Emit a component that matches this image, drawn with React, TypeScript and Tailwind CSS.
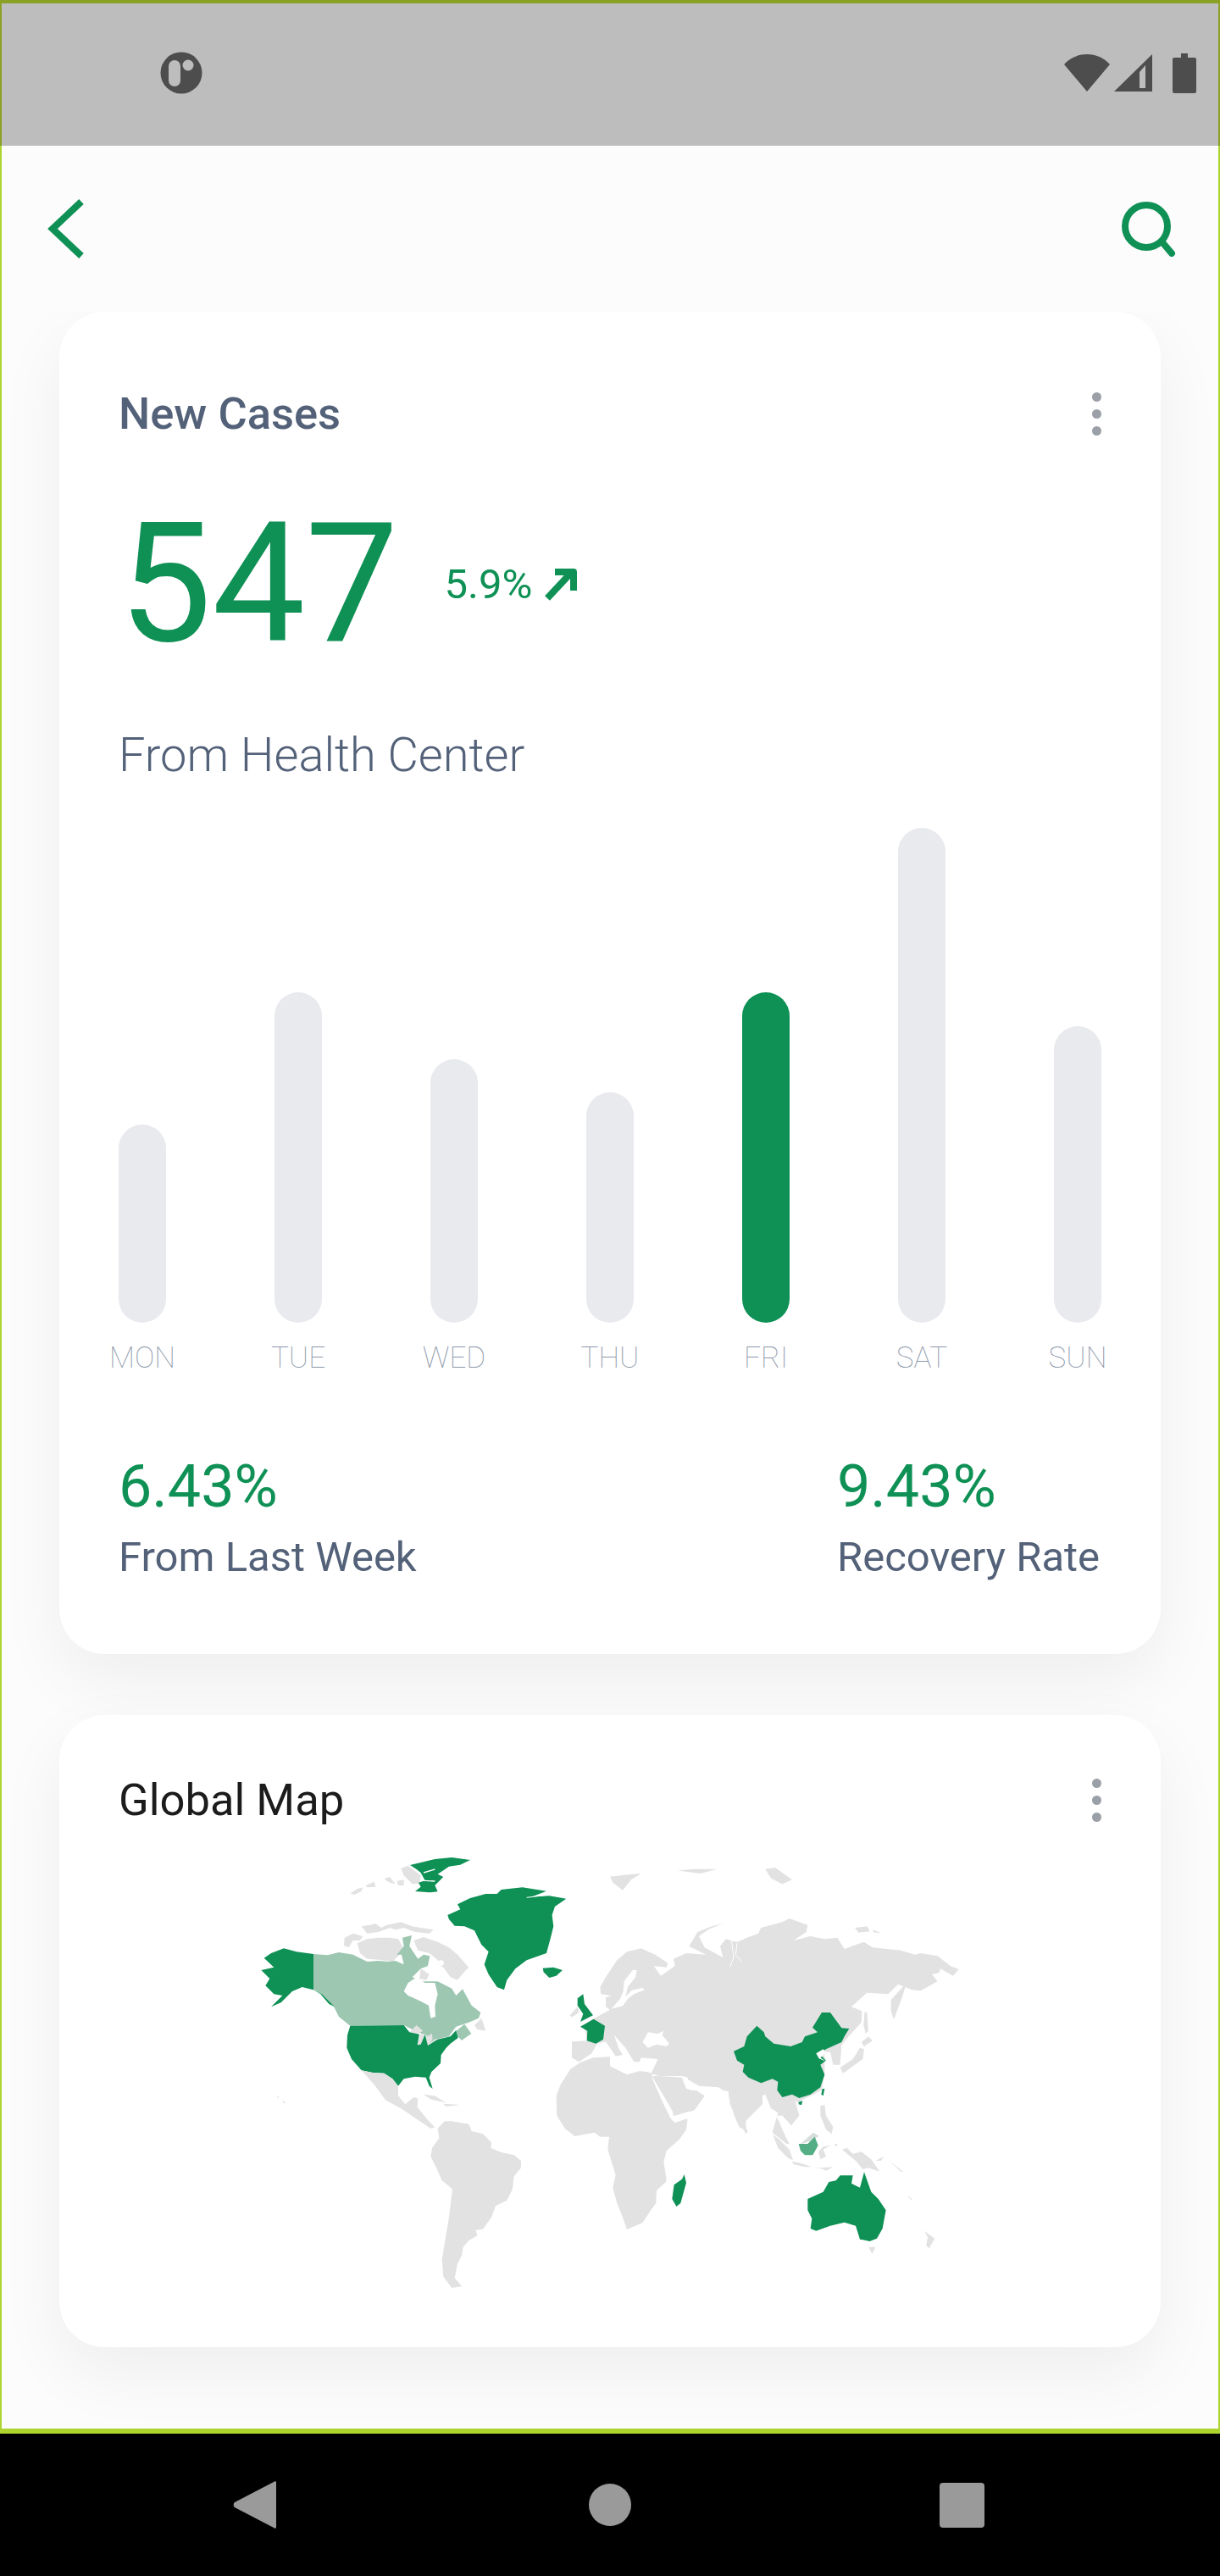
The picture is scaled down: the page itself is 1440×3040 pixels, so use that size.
import React from 'react';

const GREEN = '#0f9156';
const GREY = '#e2e2e2';
const PALE = '#9dc7b1';

const DAYS = [
  { label: 'MON', h: 'h-[234px]', on: false },
  { label: 'TUE', h: 'h-[390px]', on: false },
  { label: 'WED', h: 'h-[311px]', on: false },
  { label: 'THU', h: 'h-[272px]', on: false },
  { label: 'FRI', h: 'h-[390px]', on: true },
  { label: 'SAT', h: 'h-[584px]', on: false },
  { label: 'SUN', h: 'h-[350px]', on: false },
];

const Dots = () => (
  <div className="flex flex-col gap-[9px]">
    <div className="w-[11px] h-[11px] rounded-full bg-[#9b9fa8]" />
    <div className="w-[11px] h-[11px] rounded-full bg-[#9b9fa8]" />
    <div className="w-[11px] h-[11px] rounded-full bg-[#9b9fa8]" />
  </div>
);

// traced from 3x crops of the reference, every group keeps its crop's coordinates
const WorldMap = () => (
  <svg width="920" height="560" viewBox="240 2170 920 560" className="block">
    {/* eurasia west + europe */}
    <g transform="translate(640 2270) scale(0.3333)">
      <path fill={GREY} d="M205 225 L225 190 L265 130 L300 100 L350 88 L400 110 L445 140 L440 155 L395 150 L420 185 L470 150 L465 125 L510 105 L580 110 L520 80 L550 30 L600 10 L640 0 L590 20 L555 45 L575 85 L640 120 L630 80 L650 55 L670 60 L665 120 L700 125 L705 150 L655 155 L780 100 L780 640 L720 700 L725 742 L700 718 L665 640 L660 595 L640 590 L625 580 L555 575 L495 540 L415 540 L385 532 L410 480 L350 475 L345 490 L325 490 L310 465 L295 440 L255 395 L270 440 L285 465 L260 470 L240 440 L225 418 L195 425 L175 460 L130 490 L105 475 L105 418 L160 415 L150 370 L135 365 L185 335 L240 305 L225 295 L225 262 L245 255 L208 250 Z" />
      <path fill={GREY} d="M390 540 L415 540 L495 545 L510 585 L545 590 L575 610 L540 660 L465 692 L440 640 Z" />
      <path fill="#fff" d="M335 165 L320 165 L290 205 L287 240 L275 268 L245 302 L285 292 L305 265 L325 250 L362 235 L355 228 L318 236 L295 258 L303 225 L330 190 Z" />
      <path fill="#fff" d="M355 420 L375 385 L410 390 L430 380 L425 395 L450 425 L440 435 L405 428 L375 440 Z" />
      <path fill="#fff" d="M495 540 L515 545 L520 570 L552 572 L560 590 L545 590 L525 590 L505 570 Z" />
      <path fill={GREY} d="M715 715 L728 735 L720 745 L714 730 Z" />
      {/* africa */}
      <path fill={GREY} d="M50 610 L65 570 L100 515 L135 492 L180 475 L240 472 L240 505 L300 535 L345 522 L385 528 L405 580 L440 650 L460 690 L515 692 L510 730 L485 765 L440 805 L430 845 L440 905 L438 915 L405 945 L403 990 L385 1015 L355 1060 L300 1083 L285 1040 L265 990 L250 935 L260 890 L232 800 L237 755 L205 755 L185 740 L115 753 L80 725 L52 680 Z" />
      <path fill="#fff" d="M386 540 L400 560 L430 610 L462 665 L465 682 L520 665 L540 670 L515 690 L470 705 L455 690 L425 630 Z" />
      {/* uk, ireland, france */}
      <path fill={GREY} d="M98 325 L125 295 L130 315 L105 332 Z" />
      <path fill={GREEN} d="M125 265 L145 250 L150 285 L180 325 L135 348 L145 320 L125 290 Z" />
      <path fill={GREEN} d="M135 365 L182 338 L222 362 L216 410 L190 425 L158 415 L160 380 Z" />
    </g>

    {/* north america, greenland */}
    <g transform="translate(300 2190) scale(0.3333)">
      <path fill={GREY} d="M520 45 L545 35 L590 70 L585 98 L560 100 L530 70 Z M460 82 L480 75 L500 100 L480 95 Z M505 90 L530 85 L530 105 L510 105 Z M340 133 L365 118 L385 112 L380 125 L355 138 Z M395 105 L425 92 L430 110 L400 112 Z" />
      <path fill={GREEN} d="M552 33 L590 24 L640 12 L700 6 L765 15 L730 32 L690 38 L650 65 L670 75 L640 105 L650 127 L620 130 L570 126 L590 110 L582 95 L605 88 L590 60 L575 48 Z" />
      <path fill="none" stroke="#fff" strokeWidth="4" d="M600 60 L640 48 M600 88 L640 90" />
      <path fill={GREY} d="M380 250 L410 245 L430 240 L450 255 L470 245 L495 240 L520 235 L560 250 L590 255 L635 262 L620 275 L570 270 L530 255 L500 262 L480 255 L440 270 L400 275 Z M320 290 L350 275 L385 285 L375 300 L350 300 L335 325 L318 318 Z M365 310 L400 295 L440 290 L480 290 L510 295 L525 320 L520 345 L490 375 L440 368 L400 365 L375 345 Z M565 300 L600 288 L650 305 L690 325 L720 350 L760 395 L745 410 L720 440 L695 430 L670 395 L650 385 L650 370 L620 345 L580 335 Z M590 400 L620 420 L610 440 L585 435 Z" />
      <path fill="#fff" d="M648 380 a12 10 0 1 0 24 0 a12 10 0 1 0 -24 0 Z" />
      <path fill={PALE} d="M210 348 L260 352 L300 342 L350 350 L400 375 L440 372 L475 375 L500 372 L530 385 L522 350 L505 350 L530 320 L525 290 L558 282 L550 320 L580 365 L600 350 L622 355 L615 390 L590 400 L560 430 L600 445 L650 445 L700 470 L715 495 L738 472 L770 530 L802 555 L795 575 L760 590 L715 605 L700 625 L690 640 L640 650 L615 670 L610 635 L580 625 L530 600 L340 602 L300 570 L280 530 L240 490 L210 475 Z" />
      <path fill="#fff" d="M530 480 L545 450 L575 430 L605 450 L640 450 L650 490 L640 530 L642 570 L625 575 L618 530 L590 515 L545 495 Z" />
      <path fill={PALE} stroke="#fff" strokeWidth="2" d="M715 620 L745 595 L770 630 L735 655 L720 640 Z" />
      <path fill={GREY} d="M780 600 L805 575 L820 620 L790 615 Z" />
      <path fill={GREY} d="M550 625 L575 600 L598 620 L575 632 Z M578 670 L590 630 L605 630 L590 670 Z M610 640 L630 630 L632 650 L615 675 L640 650 L670 645 L640 662 L612 675 Z" />
      <path fill={GREEN} d="M340 602 L530 600 L550 625 L585 632 L578 670 L590 668 L605 632 L615 672 L650 650 L695 640 L715 618 L722 645 L695 665 L680 680 L662 705 L660 735 L628 765 L620 785 L632 825 L620 815 L608 785 L570 782 L530 790 L510 815 L490 790 L460 770 L420 768 L380 760 L345 720 L328 680 L330 635 Z" />
      <path fill={GREEN} d="M35 362 L60 345 L105 328 L150 340 L210 348 L210 475 L170 465 L135 480 L95 520 L60 535 L100 495 L70 490 L40 460 L55 435 L25 405 L70 395 Z M210 475 L240 490 L285 535 L265 525 L235 490 Z" />
      <path fill={GREEN} d="M685 210 L730 190 L720 172 L765 150 L820 135 L860 135 L875 120 L950 112 L1035 125 L985 145 L1045 142 L1105 152 L1065 180 L1055 210 L1060 250 L1050 290 L1035 345 L965 370 L925 400 L895 440 L885 475 L860 465 L830 420 L815 385 L830 340 L805 315 L780 265 L745 250 L710 248 L690 225 Z" />
      <path fill="none" stroke="#fff" strokeWidth="3" d="M965 148 L1030 140" />
      <path fill={GREEN} d="M1022 398 L1060 395 L1092 405 L1070 425 L1045 432 L1025 412 Z" />
      <path fill={GREY} d="M380 760 L420 768 L460 770 L490 790 L510 815 L510 850 L535 880 L565 855 L580 860 L578 890 L610 930 L640 962 L625 965 L580 935 L520 895 L465 865 L425 810 Z" />
      <path fill="#fff" d="M385 770 L430 840 L415 830 L385 780 Z" />
      <path fill={GREY} d="M600 845 L640 850 L680 875 L625 862 Z M670 878 L730 882 L680 888 Z M80 850 L90 855 L85 858 Z M100 865 L112 875 L105 877 Z" />
    </g>

    {/* south america */}
    <g transform="translate(490 2440) scale(0.3333)">
      <path fill={GREY} d="M55 315 L60 285 L85 250 L80 215 L105 190 L130 190 L190 200 L200 225 L240 235 L270 265 L268 285 L305 300 L350 310 L375 330 L375 355 L350 385 L345 430 L325 470 L285 490 L270 530 L240 572 L215 575 L220 595 L190 612 L170 635 L165 665 L150 695 L140 745 L165 775 L130 780 L100 740 L95 680 L108 600 L120 530 L132 430 L95 400 L75 355 Z" />
    </g>

    {/* eurasia east */}
    <g transform="translate(860 2240) scale(0.3333)">
      <path fill={GREY} d="M0 150 L30 155 L65 140 L105 125 L115 105 L190 85 L215 72 L280 95 L275 120 L230 150 L290 135 L340 145 L385 140 L410 180 L480 155 L510 175 L610 185 L660 200 L680 195 L740 205 L785 240 L815 252 L795 275 L750 250 L745 265 L720 270 L740 295 L680 328 L650 325 L600 305 L565 340 L490 335 L435 385 L472 400 L470 440 L425 490 L400 520 L395 590 L370 590 L360 545 L340 545 L340 620 L330 680 L260 715 L250 730 L235 715 L250 770 L222 805 L190 770 L170 770 L190 840 L215 870 L205 870 L155 830 L175 760 L150 745 L130 695 L100 705 L60 765 L62 790 L40 815 L20 770 L0 700 Z" />
      <path fill="none" stroke="#fff" strokeWidth="3" d="M10 150 L18 210 L5 242 M30 160 L25 200 L45 225" />
      <path fill={GREEN} d="M18 542 L55 525 L65 490 L100 452 L125 475 L130 490 L160 515 L220 525 L260 510 L270 490 L315 475 L297 458 L330 405 L360 405 L400 460 L427 462 L410 490 L400 510 L345 535 L320 550 L345 575 L325 590 L340 625 L325 670 L290 695 L250 708 L225 695 L190 705 L172 680 L175 650 L155 640 L115 655 L70 635 L50 615 L55 590 L30 575 Z" />
      <path fill="#fff" d="M310 550 L335 535 L345 548 L325 565 L345 578 L320 568 Z" />
      <path fill={GREEN} d="M332 675 L340 675 L335 700 L328 695 Z M248 722 L262 718 L258 733 L248 730 Z" />
      <path fill={GREY} d="M395 600 L440 570 L465 530 L480 535 L475 570 L405 620 Z M470 510 L495 490 L510 505 L480 525 Z M482 402 L490 405 L495 470 L485 480 L478 450 Z M575 360 L630 300 L615 350 L585 430 L575 400 Z M447 105 L490 100 L500 118 L460 122 Z M510 112 L540 122 L515 122 Z M325 735 L340 733 L345 770 L370 810 L365 835 L345 820 L325 770 Z" />
    </g>

    {/* south east asia, oceania */}
    <g transform="translate(900 2480) scale(0.3333)">
      <path fill={GREY} d="M37 118 L60 135 L95 170 L108 208 L90 200 L55 165 Z M55 60 L70 100 L95 150 L80 145 L60 100 Z M105 212 L140 220 L175 232 L150 232 L110 222 Z M180 232 L215 240 L200 235 Z M205 235 L250 232 L225 245 Z M198 178 L215 160 L240 155 L215 170 L225 195 L205 205 Z M255 150 L265 150 L262 162 Z M282 170 L300 165 L320 185 L350 178 L385 205 L415 248 L375 235 L355 240 L330 210 L305 190 Z M400 210 L430 195 L420 210 Z M445 208 L500 250 L490 248 Z M510 330 L532 347 L525 347 Z M573 458 L610 485 L590 520 L580 510 L585 480 Z M376 515 L400 515 L388 540 Z" />
      <path fill="#d6dedb" d="M135 150 L180 110 L200 122 L170 140 Z" />
      <path fill="#53ae85" d="M128 150 L160 150 L185 125 L197 155 L178 190 L150 190 L135 175 Z" />
      <path fill={GREEN} d="M160 345 L215 320 L235 285 L260 280 L275 262 L320 262 L315 290 L345 305 L360 250 L385 320 L410 345 L437 385 L425 450 L405 485 L380 495 L345 488 L330 440 L290 428 L240 440 L190 458 L170 450 L175 415 L160 385 Z" />
      <path fill="#fff" d="M325 440 L328 452 L318 458 Z" />
    </g>

    {/* madagascar */}
    <g transform="translate(640 2450) scale(0.3333)">
      <path fill={GREEN} d="M503 348 L510 378 L490 450 L475 462 L460 435 L467 385 L495 365 Z" />
    </g>

    {/* svalbard and the far north */}
    <g transform="translate(640 2170) scale(0.3333 0.357)">
      <path fill={GREY} d="M240 125 L290 120 L350 115 L315 135 L285 170 L250 145 Z M480 105 L540 100 L620 100 L560 115 Z M790 100 L825 95 L885 135 L850 150 L810 130 Z" />
    </g>
  </svg>
);

const App: React.FC = () => {
  return (
    <div className="w-[1440px] h-[3040px] flex flex-col bg-black font-['Roboto',sans-serif] overflow-hidden">
      {/* Status bar */}
      <div className="h-[172px] shrink-0 bg-[#bdbdbd] border-t-[4px] border-x-[2px] border-[#8aa126] flex items-center justify-between pl-[187px] pr-[26px]">
        <svg width="50" height="50" viewBox="0 0 50 50" className="mt-[-4px]">
          <circle cx="25" cy="25" r="24.5" fill="#4d4d4d" />
          <rect x="10" y="10" width="14" height="31" rx="7" fill="#bdbdbd" />
          <circle cx="33" cy="16" r="6.5" fill="#bdbdbd" />
        </svg>
        <div className="flex items-center gap-[4px] mt-[-4px]">
          <svg width="54" height="46" viewBox="0 0 54 46">
            <path d="M27 45 L0 13 C7 5 17 1 27 1 C37 1 47 5 54 13 Z" fill="#4d4d4d" />
          </svg>
          <svg width="46" height="46" viewBox="0 0 46 46" className="mr-[20px]">
            <path d="M46 1 V45 H1 Z M38 14 L31 22 V41 H38 Z" fill="#4d4d4d" fillRule="evenodd" />
          </svg>
          <svg width="28" height="47" viewBox="0 0 28 47">
            <path d="M10 0 H18 V5 H26 a2 2 0 0 1 2 2 V45 a2 2 0 0 1 -2 2 H2 a2 2 0 0 1 -2 -2 V7 a2 2 0 0 1 2 -2 H10 Z" fill="#4d4d4d" />
          </svg>
        </div>
      </div>

      {/* App */}
      <div className="h-[2700px] shrink-0 flex flex-col bg-[#fcfcfc] border-x-[2px] border-b-[6px] border-[#aed52f]">
        <header className="h-[196px] shrink-0 flex items-center justify-between pl-[53px] pr-[50px]">
          <svg width="46" height="72" viewBox="0 0 46 72" fill="none">
            <path d="M41 4 L7 36 L41 68" stroke={GREEN} strokeWidth="8" />
          </svg>
          <svg width="66" height="66" viewBox="0 0 66 66" fill="none">
            <circle cx="31" cy="30" r="25" stroke={GREEN} strokeWidth="8" />
            <path d="M50 49 L61 62" stroke={GREEN} strokeWidth="8" strokeLinecap="round" />
          </svg>
        </header>

        <main className="flex-1 overflow-hidden px-[68px] flex flex-col gap-[72px]">
          {/* New Cases */}
          <section className="h-[1584px] shrink-0 bg-white rounded-[54px] shadow-[0_30px_80px_rgba(0,0,0,0.06)] px-[70px] pt-[92px]">
            <div className="flex items-center justify-between h-[56px]">
              <h2 className="text-[52.5px] leading-[56px] font-medium text-[#536179]">New Cases</h2>
              <Dots />
            </div>
            <div className="flex items-end mt-[73px] h-[200px]">
              <span className="text-[196px] leading-[200px] text-[#0f9156]">547</span>
              <div className="flex items-center gap-[14px] ml-[54px] mb-[73px]">
                <span className="text-[49px] leading-[52px] text-[#0f9156]">5.9%</span>
                <svg width="40" height="40" viewBox="0 0 40 40" fill="none">
                  <path d="M4 36 L32 6" stroke={GREEN} strokeWidth="8" />
                  <path d="M13 5 H35 V27" stroke={GREEN} strokeWidth="8" strokeLinejoin="round" />
                </svg>
              </div>
            </div>
            <p className="text-[56px] leading-[62px] font-light text-[#536179] mt-[71px]">From Health Center</p>

            <div className="flex justify-between items-end h-[639px]">
              {DAYS.map((d) => (
                <div key={d.label} className={`w-[56px] rounded-full ${d.h} ${d.on ? 'bg-[#0f9156]' : 'bg-[#e9eaee]'}`} />
              ))}
            </div>
            <div className="flex justify-between mt-[21px]">
              {DAYS.map((d) => (
                <div key={d.label} className="w-[56px] flex justify-center">
                  <span className="text-[35px] leading-[42px] font-thin text-[#8b96a8] whitespace-nowrap">{d.label}</span>
                </div>
              ))}
            </div>

            <div className="flex justify-between mt-[90px]">
              <div>
                <div className="text-[70px] leading-[80px] text-[#0f9156]">6.43%</div>
                <div className="text-[49px] leading-[56px] text-[#536179] mt-[16px]">From Last Week</div>
              </div>
              <div className="w-[312px]">
                <div className="text-[70px] leading-[80px] text-[#0f9156]">9.43%</div>
                <div className="text-[49px] leading-[56px] text-[#536179] mt-[16px] whitespace-nowrap">Recovery Rate</div>
              </div>
            </div>
          </section>

          {/* Global Map */}
          <section className="h-[746px] shrink-0 bg-white rounded-[54px] shadow-[0_30px_80px_rgba(0,0,0,0.06)] px-[70px] pt-[72px]">
            <div className="flex items-center justify-between h-[56px]">
              <h2 className="text-[52.5px] leading-[56px] text-[#1c1c1c]">Global Map</h2>
              <Dots />
            </div>
            <div className="ml-[100px] mt-[18px]">
              <WorldMap />
            </div>
          </section>
        </main>
      </div>

      {/* Nav bar */}
      <div className="flex-1 bg-black flex items-center pl-[275px]">
        <svg width="52" height="56" viewBox="0 0 52 56">
          <path d="M50 0 a2 2 0 0 1 1 2 V54 a2 2 0 0 1 -1 2 L2 31 a4 4 0 0 1 0 -6 Z" fill="#9a9a9a" />
        </svg>
        <div className="w-[50px] h-[50px] rounded-full bg-[#9a9a9a] ml-[368px]" />
        <div className="w-[53px] h-[53px] rounded-[4px] bg-[#9a9a9a] ml-[364px]" />
      </div>
    </div>
  );
};

export default App;
